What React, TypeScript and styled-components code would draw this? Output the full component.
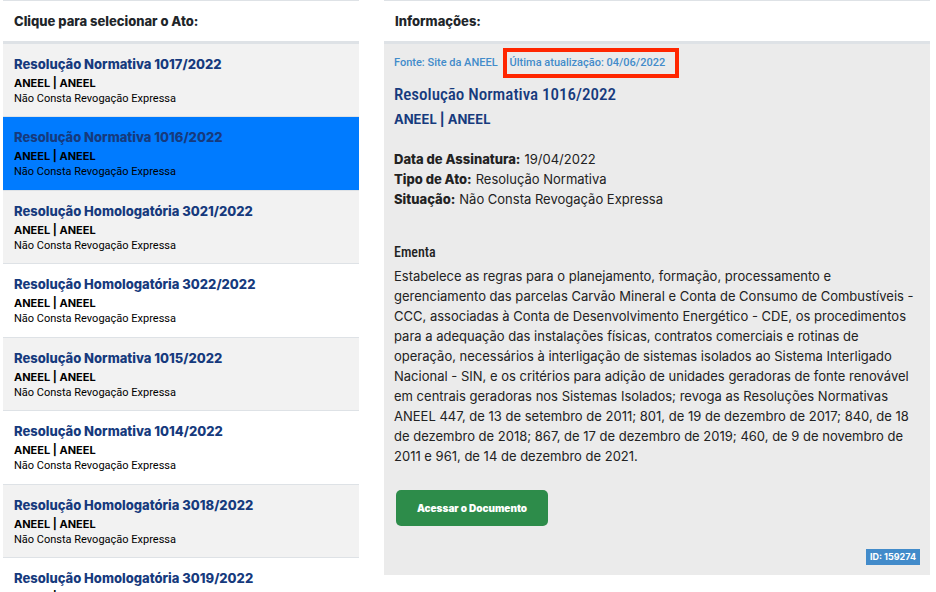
import React, { useState } from "react";
import styled, { createGlobalStyle } from "styled-components";

const GlobalStyle = createGlobalStyle`
  * { box-sizing: border-box; }
  body {
    margin: 0;
    background: #fff;
    color: #212529;
    font-family: Inter, "Liberation Sans", sans-serif;
  }
`;

const Page = styled.main`
  display: grid;
  grid-template-columns: minmax(0, 356fr) minmax(0, 546fr);
  column-gap: 25px;
  align-items: start;
  height: 100vh;
  padding: 0 6px 0 3px;
  overflow: hidden;
`;

const Column = styled.section`
  min-width: 0;
`;

const ColumnTitle = styled.h2`
  margin: 0;
  padding: 0 11px;
  border-top: 1px solid #dee2e6;
  border-bottom: 3px solid #dee2e6;
  font-size: 13px;
  line-height: 40px;
  font-weight: 800;
`;

const ActList = styled.ul`
  margin: 0;
  padding: 0;
  list-style: none;
`;

const ActButton = styled.button<{ $selected: boolean }>`
  display: block;
  width: 100%;
  padding: 10px 11px 9px;
  border: 0;
  border-bottom: 1px solid #dee2e6;
  background: ${(p) => (p.$selected ? "#007bff" : "transparent")};
  color: #000;
  font-family: inherit;
  font-size: 11px;
  line-height: 16px;
  text-align: left;
  cursor: pointer;
`;

const ActItem = styled.li`
  &:nth-child(odd) {
    background: #f2f2f2;
  }
  &:nth-child(even) ${ActButton} {
    padding-bottom: 10px;
  }
`;

const ActName = styled.strong`
  display: block;
  margin-bottom: 1px;
  color: #163a7d;
  font-size: 13px;
  line-height: 20px;
  font-weight: 800;
`;

const ActAgency = styled.span`
  display: block;
  font-weight: 700;
`;

const ActStatus = styled.span`
  display: block;
  font-family: Roboto, sans-serif;
`;

const Panel = styled.article`
  padding: 4px 10px 10px;
  background: #ebebeb;
  color: #222;
  font-size: 13px;
  line-height: 20px;
`;

const Source = styled.p`
  display: flex;
  align-items: center;
  gap: 5px;
  margin: 0;
  color: #428bca;
  font-family: Roboto, sans-serif;
  font-size: 11px;
  line-height: 22px;
  font-weight: 500;
  white-space: nowrap;
`;

const Updated = styled.span`
  padding: 0 10px 0 3px;
  border: 4px solid #ff2600;
`;

const ActTitle = styled.h1`
  margin: 5px 0 2px;
  color: #163a7d;
  font-family: "Roboto Condensed", Roboto, sans-serif;
  font-size: 17px;
  line-height: 22px;
  font-weight: 500;
`;

const Agency = styled.h2`
  margin: 0 0 18px;
  color: #163a7d;
  font-size: 13px;
  line-height: 24px;
  font-weight: 700;
`;

const Details = styled.dl`
  margin: 0 0 33px;
`;

const Detail = styled.div`
  display: flex;
  gap: 4px;

  dt {
    font-weight: 800;
  }
  dd {
    margin: 0;
  }
`;

const SummaryTitle = styled.h3`
  margin: 0 0 4px;
  font-family: "Roboto Condensed", Roboto, sans-serif;
  font-size: 14px;
  line-height: 20px;
  font-weight: 500;
`;

const Summary = styled.p`
  margin: 0;
`;

const DocumentLink = styled.a`
  display: block;
  width: fit-content;
  margin: 24px 2px 23px;
  padding: 0 21px;
  border-radius: 5px;
  background: #2d8c4a;
  color: #fff;
  font-size: 10px;
  line-height: 36px;
  font-weight: 900;
  text-decoration: none;
`;

const Footer = styled.footer`
  display: flex;
  justify-content: flex-end;
`;

const Badge = styled.span`
  padding: 0 4px;
  background: #428bca;
  color: #fff;
  font-size: 9px;
  line-height: 16px;
  font-weight: 700;
`;

const acts = [
  "Resolução Normativa 1017/2022",
  "Resolução Normativa 1016/2022",
  "Resolução Homologatória 3021/2022",
  "Resolução Homologatória 3022/2022",
  "Resolução Normativa 1015/2022",
  "Resolução Normativa 1014/2022",
  "Resolução Homologatória 3018/2022",
  "Resolução Homologatória 3019/2022",
];

const details = [
  ["Data de Assinatura:", "19/04/2022"],
  ["Tipo de Ato:", "Resolução Normativa"],
  ["Situação:", "Não Consta Revogação Expressa"],
];

export default function App() {
  const [selected, setSelected] = useState(1);
  return (
    <>
      <GlobalStyle />
      <Page>
        <Column>
          <ColumnTitle>Clique para selecionar o Ato:</ColumnTitle>
          <ActList>
            {acts.map((name, i) => (
              <ActItem key={name}>
                <ActButton
                  type="button"
                  $selected={i === selected}
                  aria-pressed={i === selected}
                  onClick={() => setSelected(i)}
                >
                  <ActName>{name}</ActName>
                  <ActAgency>ANEEL | ANEEL</ActAgency>
                  <ActStatus>Não Consta Revogação Expressa</ActStatus>
                </ActButton>
              </ActItem>
            ))}
          </ActList>
        </Column>
        <Column>
          <ColumnTitle>Informações:</ColumnTitle>
          <Panel>
            <Source>
              <span>Fonte: Site da ANEEL</span>
              <Updated>Última atualização: 04/06/2022</Updated>
            </Source>
            <ActTitle>{acts[selected]}</ActTitle>
            <Agency>ANEEL | ANEEL</Agency>
            <Details>
              {details.map(([label, value]) => (
                <Detail key={label}>
                  <dt>{label}</dt>
                  <dd>{value}</dd>
                </Detail>
              ))}
            </Details>
            <SummaryTitle>Ementa</SummaryTitle>
            <Summary>
              Estabelece as regras para o planejamento, formação, processamento e
              gerenciamento das parcelas Carvão Mineral e Conta de Consumo de
              Combustíveis - CCC, associadas à Conta de Desenvolvimento Energético
              - CDE, os procedimentos para a adequação das instalações físicas,
              contratos comerciais e rotinas de operação, necessários à
              interligação de sistemas isolados ao Sistema Interligado Nacional -
              SIN, e os critérios para adição de unidades geradoras de fonte
              renovável em centrais geradoras nos Sistemas Isolados; revoga as
              Resoluções Normativas ANEEL 447, de 13 de setembro de 2011; 801, de
              19 de dezembro de 2017; 840, de 18 de dezembro de 2018; 867, de 17
              de dezembro de 2019; 460, de 9 de novembro de 2011 e 961, de 14 de
              dezembro de 2021.
            </Summary>
            <DocumentLink href="#documento">Acessar o Documento</DocumentLink>
            <Footer>
              <Badge>ID: 159274</Badge>
            </Footer>
          </Panel>
        </Column>
      </Page>
    </>
  );
}
